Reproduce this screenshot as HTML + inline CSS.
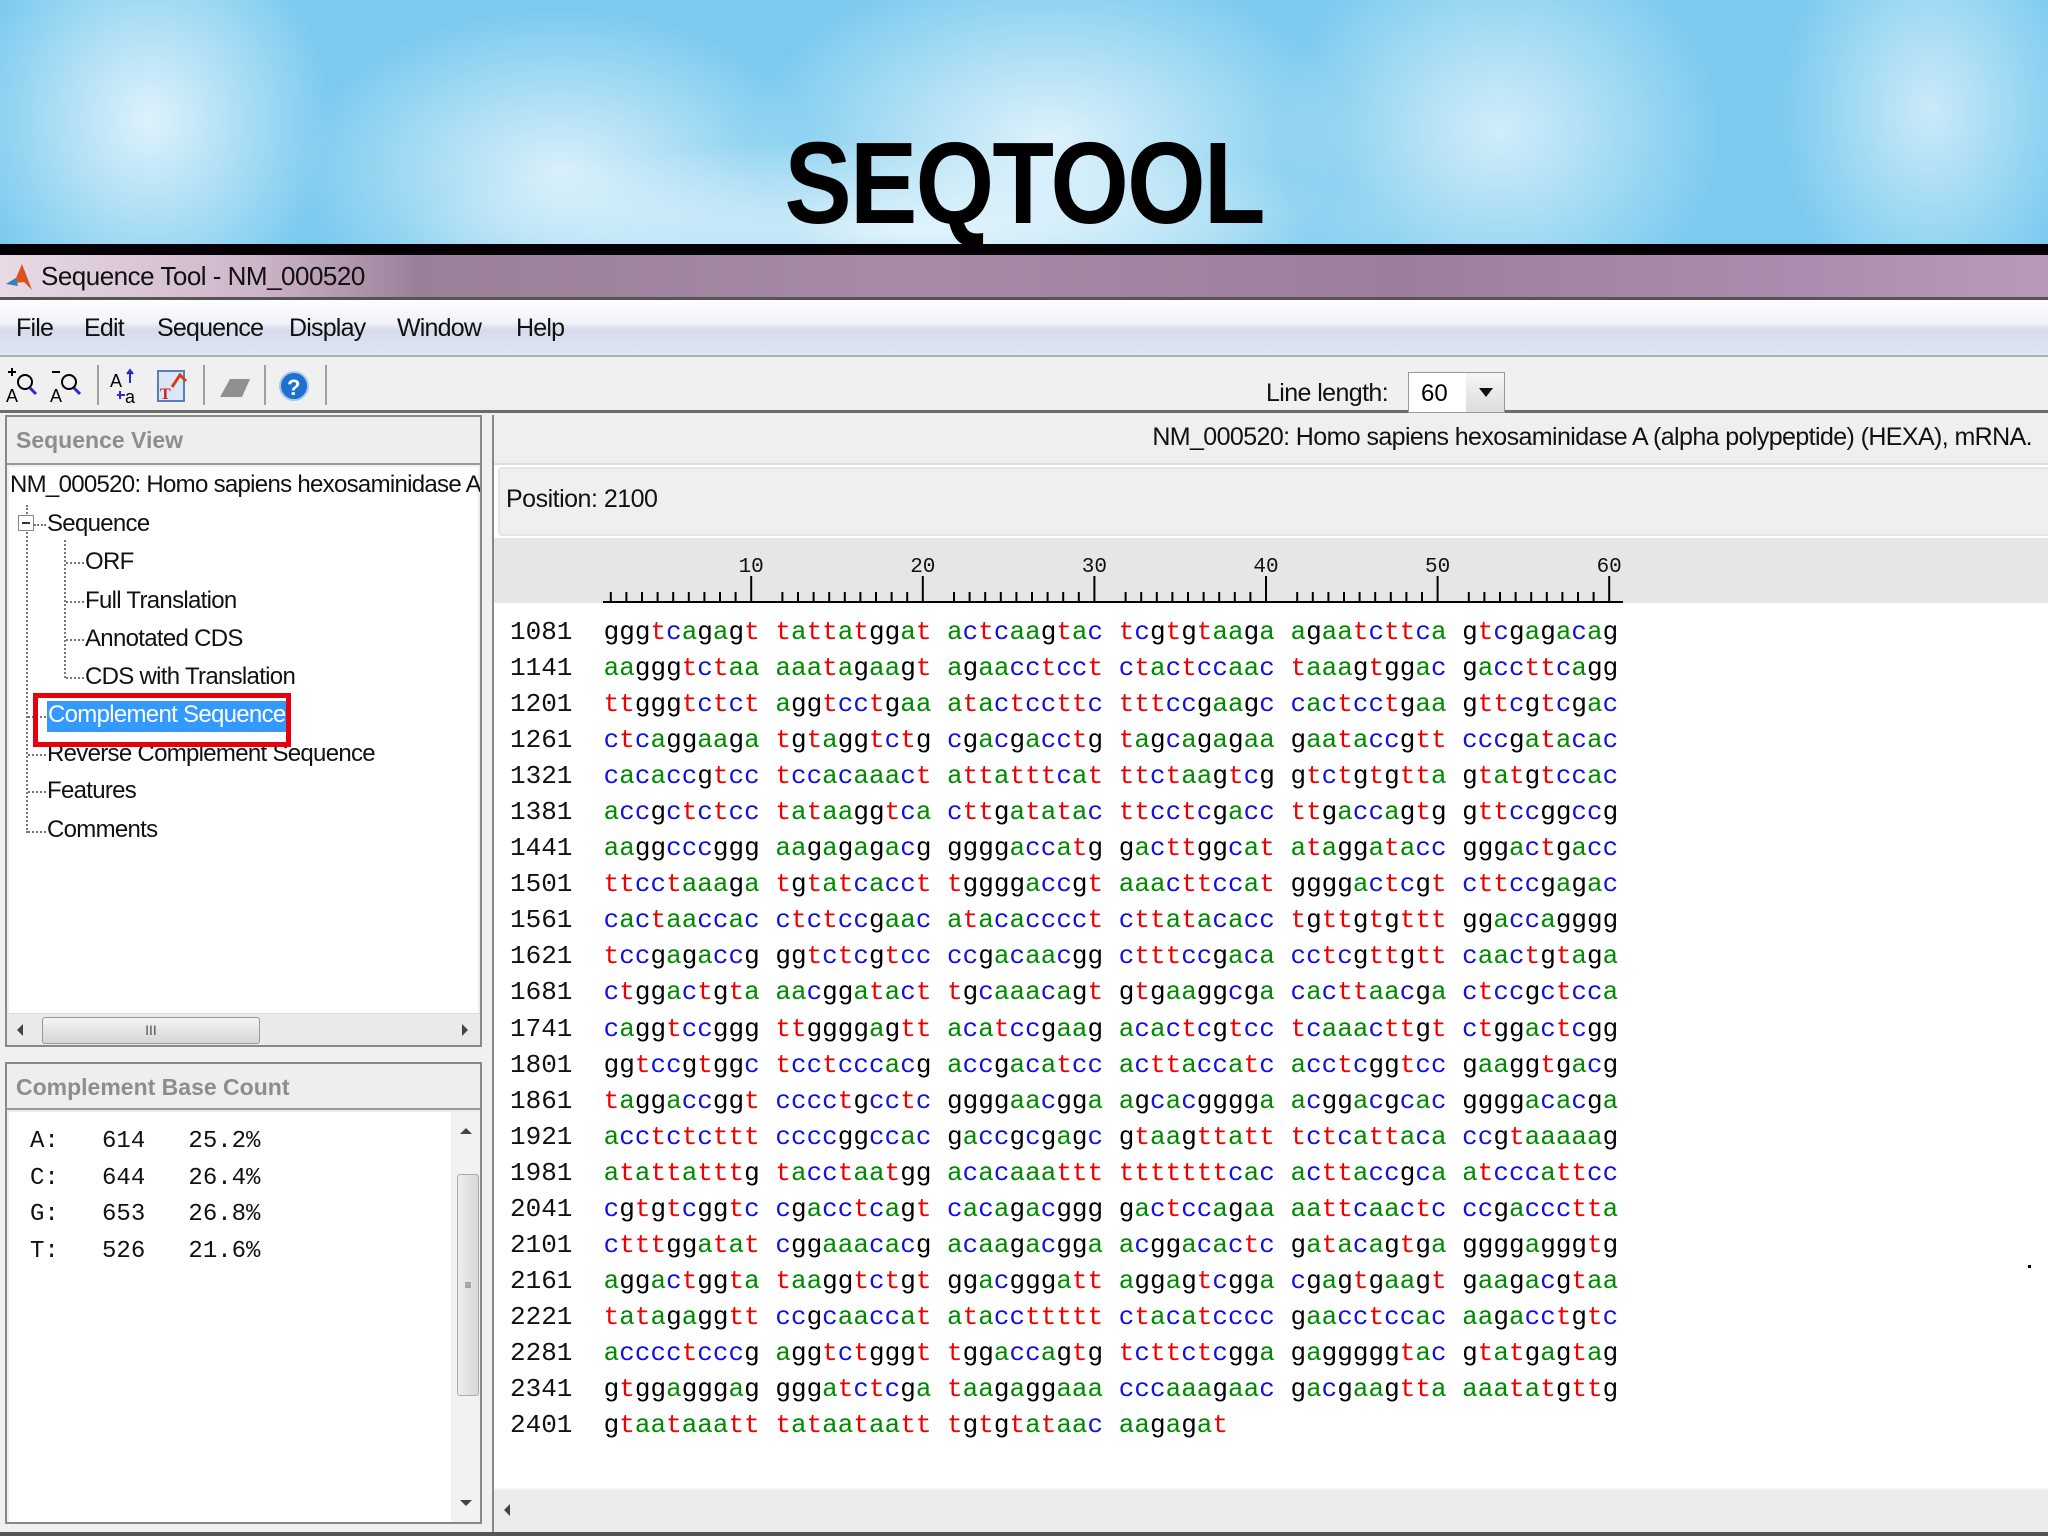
<!DOCTYPE html>
<html><head><meta charset="utf-8">
<style>
*{margin:0;padding:0;box-sizing:border-box}
body{width:2048px;height:1536px;position:relative;overflow:hidden;background:#f0f0f0;font-family:"Liberation Sans",sans-serif}
.abs{position:absolute}
#banner{left:0;top:0;width:2048px;height:246px;background:
radial-gradient(ellipse 180px 200px at 150px 120px,rgba(255,255,255,.75),rgba(255,255,255,0)),
radial-gradient(ellipse 260px 160px at 560px 170px,rgba(255,255,255,.7),rgba(255,255,255,0)),
radial-gradient(ellipse 300px 180px at 1050px 140px,rgba(255,255,255,.75),rgba(255,255,255,0)),
radial-gradient(ellipse 220px 200px at 1500px 130px,rgba(255,255,255,.65),rgba(255,255,255,0)),
radial-gradient(ellipse 150px 200px at 1930px 110px,rgba(255,255,255,.6),rgba(255,255,255,0)),
radial-gradient(ellipse 500px 90px at 900px 230px,rgba(255,255,255,.7),rgba(255,255,255,0)),
#7ccbef}
#seq{left:0;width:2048px;top:118px;text-align:center;font-weight:bold;font-size:116px;line-height:130px;color:#000;letter-spacing:-2px;transform:scaleX(.87);transform-origin:1025px 0}
#blk{left:0;top:244px;width:2048px;height:11px;background:#050005}
#title{left:0;top:255px;width:2048px;height:45px;background:linear-gradient(90deg,#e8dbe6 0,#cdb5c9 260px,#9a7f98 420px,#a68aa6 900px,#9c7e9c 1400px,#aa8cae 1800px,#b89ab8 2048px);border-bottom:3px solid #555}
#title span{position:absolute;left:41px;top:6px;font-size:26px;color:#111;letter-spacing:-.5px}
#menu{left:0;top:300px;width:2048px;height:57px;background:linear-gradient(#fdfdff 0,#f2f3fa 40%,#d6dcec 55%,#dfe4f4 100%);border-bottom:2px solid #a9b0b8}
#menu span{position:absolute;top:14px;font-size:25px;color:#111;letter-spacing:-.8px}
#tool{left:0;top:357px;width:2048px;height:56px;background:#f0f0f0;border-bottom:3px solid #6b6b6b}
.sep{position:absolute;top:8px;width:2px;height:40px;background:#a0a0a0}
.pl{position:absolute;font-size:26px;color:#111}
#left1{left:5px;top:415px;width:477px;height:632px;background:#eee;border:2px solid #888}
#left2{left:5px;top:1062px;width:477px;height:462px;background:#eee;border:2px solid #888}
.hdr{position:absolute;left:9px;font-size:23px;font-weight:bold;color:#8d8d8d}
.tree{position:absolute;font-size:24px;color:#111;white-space:nowrap;letter-spacing:-.7px}
#right{left:492px;top:415px;width:1556px;height:1118px;background:#fff;border-left:2px solid #888}
#seqtxt{position:absolute;left:510px;top:614px;font-family:"Liberation Mono",monospace;font-size:26px;line-height:36.05px;white-space:pre;color:#000}
.a{color:#008a00}.c{color:#1010e0}.g{color:#000}.t{color:#ee0000}
.num{color:#111}
</style></head><body>
<div id="banner" class="abs"></div>
<div id="seq" class="abs">SEQTOOL</div>
<div id="blk" class="abs"></div>
<div id="title" class="abs">
<svg style="position:absolute;left:4px;top:7px" width="30" height="30" viewBox="0 0 30 30"><path d="M2 22 L12 16 L18 2 L28 28 L20 20 Z" fill="#d9531e"/><path d="M2 22 L12 16 L14 24 Z" fill="#3a7fc2"/></svg>
<span>Sequence Tool - NM_000520</span></div>
<div id="menu" class="abs">
<span style="left:16px">File</span><span style="left:84px">Edit</span><span style="left:157px">Sequence</span><span style="left:289px">Display</span><span style="left:397px">Window</span><span style="left:516px">Help</span></div>
<div id="tool" class="abs">
<svg style="position:absolute;left:0;top:0" width="340" height="56">
<g font-family="Liberation Sans" font-size="18" fill="#000"><text x="6" y="45">A</text><text x="50" y="45">A</text><text x="110" y="30">A</text><text x="125" y="46">a</text></g>
<g stroke="#000" stroke-width="2" fill="none"><path d="M8 15h8M12 11v8"/><path d="M52 15h8"/><circle cx="25" cy="25" r="7"/><circle cx="69" cy="25" r="7"/></g>
<g stroke="#2a2ad0" stroke-width="3"><path d="M30 31l6 6M74 31l6 6"/><path d="M130 14l0 12M127 17l3-4 3 4M117 38h8M120 34v8" stroke-width="2"/></g>
<rect x="158" y="14" width="26" height="30" fill="#dbe7f7" stroke="#5a7fb8" stroke-width="2"/>
<text x="160" y="42" font-size="16" font-weight="bold" fill="#d02020" font-family="Liberation Serif">T</text>
<path d="M172 30l8-12 6 6" stroke="#d04010" stroke-width="3" fill="none"/>
<path d="M220 40l10-18h20l-8 18z" fill="#909090"/>
<circle cx="294" cy="29" r="14" fill="#1f6fd0" stroke="#a8c8f0" stroke-width="2"/>
<text x="287" y="38" font-size="22" font-weight="bold" fill="#fff">?</text>
</svg>
<div class="sep" style="left:97px"></div><div class="sep" style="left:203px"></div><div class="sep" style="left:264px"></div><div class="sep" style="left:325px"></div>
<span class="pl" style="left:1266px;top:22px;font-size:25px;letter-spacing:-.6px">Line length:</span>
<div style="position:absolute;left:1408px;top:15px;width:97px;height:41px;background:#fff;border:1px solid #999">
<span style="position:absolute;left:12px;top:7px;font-size:24px">60</span>
<div style="position:absolute;right:0;top:0;width:38px;height:39px;background:linear-gradient(#f6f6f6,#dcdcdc)"><div style="position:absolute;left:13px;top:15px;border-left:7px solid transparent;border-right:7px solid transparent;border-top:9px solid #111"></div></div></div>
</div>

<div id="left1" class="abs">
<div style="position:absolute;left:0;top:0;width:473px;height:48px;background:#eeeeee;border-bottom:2px solid #999"></div>
<div class="hdr" style="top:10px">Sequence View</div>
<div style="position:absolute;left:2px;top:50px;width:469px;height:548px;background:#fff"></div>
</div>
<div class="tree" style="left:10px;top:471px;width:470px;overflow:hidden">NM_000520: Homo sapiens hexosaminidase A</div>
<div class="abs" style="left:26px;top:505px;height:328px;border-left:2px dotted #777"></div>
<div class="abs" style="left:64px;top:540px;height:138px;border-left:2px dotted #777"></div>
<div class="abs" style="left:18px;top:515px;width:16px;height:16px;border:1px solid #888;background:#fff"><div style="position:absolute;left:3px;top:6px;width:8px;height:2px;background:#333"></div></div>
<div class="abs" style="left:34px;top:524px;width:12px;border-top:2px dotted #777"></div>
<div class="tree" style="left:47px;top:510px">Sequence</div>
<div class="abs" style="left:66px;top:562px;width:18px;border-top:2px dotted #777"></div>
<div class="tree" style="left:85px;top:548px">ORF</div>
<div class="abs" style="left:66px;top:601px;width:18px;border-top:2px dotted #777"></div>
<div class="tree" style="left:85px;top:587px">Full Translation</div>
<div class="abs" style="left:66px;top:639px;width:18px;border-top:2px dotted #777"></div>
<div class="tree" style="left:85px;top:625px">Annotated CDS</div>
<div class="abs" style="left:66px;top:677px;width:18px;border-top:2px dotted #777"></div>
<div class="tree" style="left:85px;top:663px">CDS with Translation</div>
<div class="abs" style="left:28px;top:716px;width:18px;border-top:2px dotted #777"></div>
<div class="abs" style="left:47px;top:701px;width:242px;height:31px;background:#3399ff"></div>
<div class="tree" style="left:48px;top:701px;color:#fff">Complement Sequence</div>
<div class="abs" style="left:28px;top:754px;width:18px;border-top:2px dotted #777"></div>
<div class="tree" style="left:47px;top:740px">Reverse Complement Sequence</div>
<div class="abs" style="left:33px;top:693px;width:258px;height:54px;border:5px solid #e8000e"></div>
<div class="abs" style="left:28px;top:791px;width:18px;border-top:2px dotted #777"></div>
<div class="tree" style="left:47px;top:777px">Features</div>
<div class="abs" style="left:28px;top:831px;width:18px;border-top:2px dotted #777"></div>
<div class="tree" style="left:47px;top:816px">Comments</div>
<!-- h scrollbar -->
<div class="abs" style="left:7px;top:1013px;width:473px;height:32px;background:#eaeaea;border-top:1px solid #ddd">
<div style="position:absolute;left:35px;top:3px;width:218px;height:27px;background:linear-gradient(#f4f4f4,#d6d6d6);border:1px solid #999;border-radius:3px;text-align:center;font-size:14px;line-height:25px;color:#555">III</div>
<div style="position:absolute;left:10px;top:10px;border-top:6px solid transparent;border-bottom:6px solid transparent;border-right:6px solid #444"></div>
<div style="position:absolute;right:12px;top:10px;border-top:6px solid transparent;border-bottom:6px solid transparent;border-left:6px solid #444"></div>
</div>

<div id="left2" class="abs">
<div style="position:absolute;left:0;top:0;width:473px;height:46px;background:#eee;border-bottom:2px solid #999"></div>
<div class="hdr" style="top:10px">Complement Base Count</div>
<div style="position:absolute;left:2px;top:48px;width:469px;height:410px;background:#fff"></div>
<div style="position:absolute;left:444px;top:48px;width:29px;height:410px;background:#f2f2f2">
<div style="position:absolute;left:6px;top:62px;width:22px;height:222px;background:linear-gradient(90deg,#eee,#d8d8d8);border:1px solid #aaa;border-radius:3px;text-align:center;line-height:220px;font-size:12px;color:#555">≡</div>
<div style="position:absolute;left:9px;top:16px;border-left:6px solid transparent;border-right:6px solid transparent;border-bottom:6px solid #444"></div>
<div style="position:absolute;left:9px;bottom:16px;border-left:6px solid transparent;border-right:6px solid transparent;border-top:6px solid #444"></div>
</div>
<pre style="position:absolute;left:23px;top:60px;font-family:'Liberation Mono',monospace;font-size:24px;line-height:36.5px;color:#111">A:   614   25.2%
C:   644   26.4%
G:   653   26.8%
T:   526   21.6%</pre>
</div>

<div id="right" class="abs">
<div style="position:absolute;left:0;top:0;width:1556px;height:50px;background:#efefef;border-bottom:2px solid #ddd"></div>
<div style="position:absolute;right:16px;top:8px;font-size:25px;color:#111;letter-spacing:-.6px">NM_000520: Homo sapiens hexosaminidase A (alpha polypeptide) (HEXA), mRNA.</div>
<div style="position:absolute;left:4px;top:52px;width:1552px;height:69px;background:#efefef;border:2px solid #e4e4e4;border-radius:4px"></div>
<div style="position:absolute;left:12px;top:70px;font-size:25px;color:#111;letter-spacing:-.5px">Position: 2100</div>
<div style="position:absolute;left:0;top:123px;width:1556px;height:65px;background:#e6e6e6"></div>
<div style="position:absolute;left:0;top:1073px;width:1556px;height:45px;background:#ececec;border-top:2px solid #f6f6f6"><div style="position:absolute;left:10px;top:14px;border-top:6px solid transparent;border-bottom:6px solid transparent;border-right:6px solid #444"></div></div>
</div>
<svg class="abs" style="left:0;top:540px" width="2048" height="66" id="ruler"></svg>
<div class="abs" style="left:0;top:1532px;width:2048px;height:4px;background:#555"></div>
<div class="abs" style="left:2028px;top:1265px;width:3px;height:3px;background:#000"></div>

<pre id="seqtxt"><span class="num">1081</span>  gggtcagagt tattatggat actcaagtac tcgtgtaaga agaatcttca gtcgagacag
<span class="num">1141</span>  aagggtctaa aaatagaagt agaacctcct ctactccaac taaagtggac gaccttcagg
<span class="num">1201</span>  ttgggtctct aggtcctgaa atactccttc tttccgaagc cactcctgaa gttcgtcgac
<span class="num">1261</span>  ctcaggaaga tgtaggtctg cgacgacctg tagcagagaa gaataccgtt cccgatacac
<span class="num">1321</span>  cacaccgtcc tccacaaact attatttcat ttctaagtcg gtctgtgtta gtatgtccac
<span class="num">1381</span>  accgctctcc tataaggtca cttgatatac ttcctcgacc ttgaccagtg gttccggccg
<span class="num">1441</span>  aaggcccggg aagagagacg ggggaccatg gacttggcat ataggatacc gggactgacc
<span class="num">1501</span>  ttcctaaaga tgtatcacct tggggaccgt aaacttccat ggggactcgt cttccgagac
<span class="num">1561</span>  cactaaccac ctctccgaac atacacccct cttatacacc tgttgtgttt ggaccagggg
<span class="num">1621</span>  tccgagaccg ggtctcgtcc ccgacaacgg ctttccgaca cctcgttgtt caactgtaga
<span class="num">1681</span>  ctggactgta aacggatact tgcaaacagt gtgaaggcga cacttaacga ctccgctcca
<span class="num">1741</span>  caggtccggg ttggggagtt acatccgaag acactcgtcc tcaaacttgt ctggactcgg
<span class="num">1801</span>  ggtccgtggc tcctcccacg accgacatcc acttaccatc acctcggtcc gaaggtgacg
<span class="num">1861</span>  taggaccggt cccctgcctc ggggaacgga agcacgggga acggacgcac ggggacacga
<span class="num">1921</span>  acctctcttt ccccggccac gaccgcgagc gtaagttatt tctcattaca ccgtaaaaag
<span class="num">1981</span>  atattatttg tacctaatgg acacaaattt tttttttcac acttaccgca atcccattcc
<span class="num">2041</span>  cgtgtcggtc cgacctcagt cacagacggg gactccagaa aattcaactc ccgaccctta
<span class="num">2101</span>  ctttggatat cggaaacacg acaagacgga acggacactc gatacagtga ggggagggtg
<span class="num">2161</span>  aggactggta taaggtctgt ggacgggatt aggagtcgga cgagtgaagt gaagacgtaa
<span class="num">2221</span>  tatagaggtt ccgcaaccat ataccttttt ctacatcccc gaacctccac aagacctgtc
<span class="num">2281</span>  acccctcccg aggtctgggt tggaccagtg tcttctcgga gagggggtac gtatgagtag
<span class="num">2341</span>  gtggagggag gggatctcga taagaggaaa cccaaagaac gacgaagtta aaatatgttg
<span class="num">2401</span>  gtaataaatt tataataatt tgtgtataac aagagat</pre>
<script>
(function(){
var pre=document.getElementById('seqtxt');
var nodes=[].slice.call(pre.childNodes);
nodes.forEach(function(n){
 if(n.nodeType===3){
  var frag=document.createDocumentFragment();
  var s=n.textContent;
  for(var i=0;i<s.length;i++){
   var ch=s[i];
   if('acgt'.indexOf(ch)>=0){var sp=document.createElement('span');sp.className=ch;sp.textContent=ch;frag.appendChild(sp);}
   else frag.appendChild(document.createTextNode(ch));
  }
  pre.replaceChild(frag,n);
 }
});
var svg=document.getElementById('ruler'),h='';
var x0=603,cw=15.6;
h+='<line x1="'+x0+'" y1="62" x2="1623" y2="62" stroke="#000" stroke-width="2"/>';
for(var k=1;k<=60;k++){
 var idx=k-1+Math.floor((k-1)/10);
 var x=x0+idx*cw+cw/2;
 var big=(k%10===0);
 h+='<line x1="'+x+'" y1="'+(big?36:52)+'" x2="'+x+'" y2="62" stroke="#000" stroke-width="2"/>';
 if(big)h+='<text x="'+x+'" y="32" text-anchor="middle" font-family="Liberation Mono" font-size="21" fill="#111">'+k+'</text>';
}
svg.innerHTML=h;
})();
</script>
</body></html>
